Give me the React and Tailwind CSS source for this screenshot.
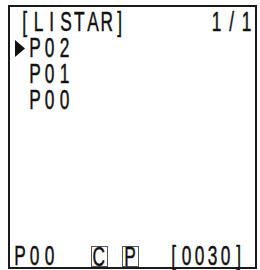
const Chars = ({ text, w }) =>
  text.split('').map((c, i) => (
    <span key={i} className="inline-flex shrink-0 justify-center" style={{ width: w }}>
      <span className="inline-block scale-x-[0.64]">{c}</span>
    </span>
  ));

const Cursor = () => (
  <svg width="10" height="17" viewBox="0 0 10 17" className="shrink-0">
    <polygon points="0,0 10,8.5 0,17" fill="#111" />
  </svg>
);

const Boxed = ({ ch }) => (
  <span className="flex h-[21px] w-[17px] shrink-0 items-center justify-center border border-[#555] leading-[18px]">
    <span className="inline-block scale-x-[0.64]">{ch}</span>
  </span>
);

const programs = ['P02', 'P01', 'P00'];

export default function App() {
  return (
    <div
      className="h-[270px] w-[260px] bg-white pl-[8px] pt-[5px] text-[27px] text-[#111] [-webkit-text-stroke:0.5px_#111]"
      style={{ fontFamily: '"Liberation Sans", Arial, sans-serif' }}
    >
      <div className="flex h-[264px] w-[249px] flex-col border-2 border-[#1a1a1a] pt-[2px]">
        <div className="flex h-[26px] items-center justify-between pl-[8px] pr-[1px] leading-[26px]">
          <div className="flex">
            <Chars text="[LISTAR]" w={13.6} />
          </div>
          <div className="flex">
            <Chars text="1/1" w={15} />
          </div>
        </div>

        {programs.map((p, i) => (
          <div key={p} className="flex h-[26px] items-center pl-[5px] leading-[26px]">
            {i === 0 ? <Cursor /> : <span className="w-[10px] shrink-0" />}
            <span className="ml-[2px] flex">
              <Chars text={p} w={15} />
            </span>
          </div>
        ))}

        <div className="mt-auto flex h-[22px] items-end pl-[3px] leading-[22px]">
          <div className="flex">
            <Chars text="P00" w={14.5} />
          </div>
          <div className="ml-[34px] flex items-end gap-[14px]">
            <Boxed ch="C" />
            <Boxed ch="P" />
          </div>
          <div className="ml-[29px] flex">
            <Chars text="[0030]" w={13} />
          </div>
        </div>
      </div>
    </div>
  );
}
